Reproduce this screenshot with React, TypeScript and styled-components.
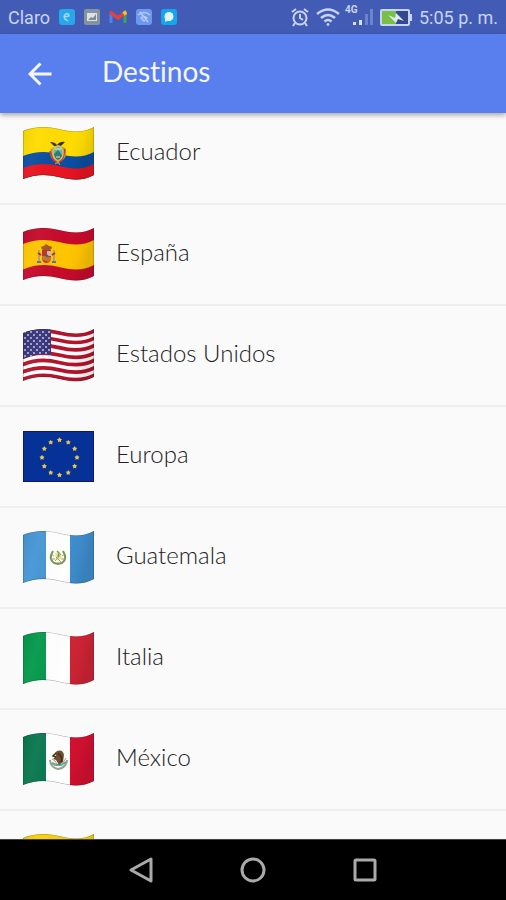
import React, { useId } from "react";
import type { ReactNode } from "react";
import styled, { createGlobalStyle } from "styled-components";

const GlobalStyle = createGlobalStyle`
  * { box-sizing: border-box; }
  body { margin: 0; background: #fafafa; }
`;

const Screen = styled.div`
  display: flex;
  flex-direction: column;
  height: 100vh;
  overflow: hidden;
  background: #fafafa;
  font-family: Lato, "Open Sans", sans-serif;
  font-variant-ligatures: none;
`;

const StatusBar = styled.div`
  display: flex;
  flex: none;
  align-items: center;
  justify-content: space-between;
  height: 34px;
  padding: 0 8px;
  background: #425cb5;
  color: #c9d4f3;
  font-family: Roboto, sans-serif;
  font-size: 18px;
  line-height: 34px;
  white-space: nowrap;
`;

const StatusGroup = styled.div<{ $gap: number }>`
  display: flex;
  align-items: center;
  gap: ${(p) => p.$gap}px;
`;

const StatusText = styled.span`
  padding-top: 2px;
`;

const Header = styled.header`
  position: relative;
  z-index: 1;
  display: flex;
  flex: none;
  align-items: center;
  gap: 46px;
  height: 79px;
  padding: 0 24px;
  background: #597fee;
  box-shadow: 0 2px 5px rgba(0, 0, 0, 0.35);
  color: #f4f7ff;
`;

const BackButton = styled.button`
  display: flex;
  width: 32px;
  height: 32px;
  padding: 0;
  align-items: center;
  justify-content: center;
  border: 0;
  background: none;
  color: inherit;
  cursor: pointer;
`;

const Title = styled.h1`
  margin: 0;
  padding-bottom: 6px;
  font-size: 28px;
  font-weight: 400;
  line-height: 36px;
`;

const Viewport = styled.main`
  flex: 1;
  min-height: 0;
  overflow: hidden;
`;

const List = styled.ul`
  margin: -9px 0 0;
  padding: 0;
  list-style: none;
`;

const Row = styled.li`
  height: 101px;
  border-bottom: 2px solid #eeeeee;
`;

const RowLink = styled.a`
  display: flex;
  align-items: center;
  gap: 22px;
  height: 100%;
  padding: 0 23px;
  color: #222222;
  font-size: 24px;
  font-weight: 300;
  line-height: 32px;
  text-decoration: none;
`;

const RowLabel = styled.span`
  padding-bottom: 6px;
`;

const FlagArt = styled.svg`
  display: block;
  flex: none;
  width: 71px;
  height: 54px;
`;

const NavBar = styled.nav`
  display: flex;
  flex: none;
  align-items: center;
  justify-content: center;
  gap: 72px;
  height: 61px;
  border-top: 1px solid #444444;
  background: #000000;
`;

const NavButton = styled.button`
  display: flex;
  align-items: center;
  justify-content: center;
  width: 40px;
  height: 40px;
  padding: 0;
  border: 0;
  background: none;
  cursor: pointer;
`;

const curve = (y: number) =>
  `M-1 ${y + 4} L0 ${y + 4} C12 ${y - 1} 24 ${y - 1} 36 ${y + 2} S60 ${y + 6} 71 ${y} L72 ${y}`;

const outline =
  "M0 4 C12 -1 24 -1 36 2 S60 6 71 0 V48 C60 54 48 53 36 50 S12 47 0 52 Z";

const Band = ({ y, h, fill }: { y: number; h: number; fill: string }) => (
  <path d={curve(y + h / 2)} fill="none" stroke={fill} strokeWidth={h} />
);

function Waving({ children }: { children: ReactNode }) {
  const id = useId();
  return (
    <FlagArt viewBox="0 0 71 54" aria-hidden="true">
      <defs>
        <clipPath id={`${id}c`}>
          <path d={outline} />
        </clipPath>
        <linearGradient id={`${id}g`} x1="0" x2="1" y1="0" y2="0.2">
          <stop offset="0" stopColor="#000" stopOpacity="0.06" />
          <stop offset="0.25" stopColor="#fff" stopOpacity="0.04" />
          <stop offset="0.7" stopColor="#000" stopOpacity="0" />
          <stop offset="0.85" stopColor="#000" stopOpacity="0.03" />
          <stop offset="1" stopColor="#000" stopOpacity="0.1" />
        </linearGradient>
      </defs>
      <g clipPath={`url(#${id}c)`}>
        {children}
        <path d={outline} fill={`url(#${id}g)`} />
        <path d={outline} fill="none" stroke="#222" strokeOpacity="0.4" strokeWidth="1" />
      </g>
    </FlagArt>
  );
}

const Tricolor = ({ left, middle, right, children }: {
  left: string; middle: string; right: string; children?: ReactNode;
}) => (
  <Waving>
    <rect width="71" height="54" fill={middle} />
    <rect width="23" height="54" fill={left} />
    <rect x="47" width="24" height="54" fill={right} />
    {children}
  </Waving>
);

const Ecuador = () => (
  <Waving>
    <rect width="71" height="54" fill="#ffdc00" />
    <path d={`${curve(25)} V54 H-1 Z`} fill="#0b4ea2" />
    <path d={`${curve(37)} V54 H-1 Z`} fill="#e91420" />
    <path d="M27 15 q5 0 7 3 q3-4 8-3 l-3 3 -3 2 -5-1z" fill="#3c3420" />
    <path d="M28 22 q-2 6 1 10 l6 5 6-5 q4-5 1-11 l-7-3z" fill="#b79a37" />
    <path d="M27 24 l3 8 4 4M42 22 l-2 9-4 5" fill="none" stroke="#d5343b" strokeWidth="1.5" />
    <ellipse cx="35" cy="26" rx="5" ry="7" fill="#62b8b0" stroke="#d7c26a" strokeWidth="1.5" />
    <path d="M31 27 l4-4 4 5 q-1 4-4 5 q-3-1-4-6z" fill="#367b68" />
    <path d="M32 22h6M33 30h4" stroke="#e9e7d3" strokeWidth="1" />
    <path d="M32 37l3-2 2 3" stroke="#c6a148" fill="none" />
  </Waving>
);

const Spain = () => (
  <Waving>
    <rect width="71" height="54" fill="#c60b2c" />
    <path d={`${curve(12)} V${37} L71 37 C60 43 48 42 36 39 S12 36 -1 42 Z`} fill="#ffc500" />
    <path d="M16 22v12M31 22v12" stroke="#b8a078" strokeWidth="2" />
    <path d="M14 34h4M29 34h4" stroke="#477c9a" strokeWidth="2" />
    <path d="M15 25l3 2M32 25l-3 2" stroke="#b72b21" strokeWidth="2" />
    <path d="M18 20q0-2 3-2l2-2 3 2q3 0 3 2l-2 2h-7z" fill="#a45521" />
    <path d="M19 22h9v9q-1 4-4.500 4T19 31z" fill="#b93525" />
    <path d="M24 23h4v5h-4z" fill="#d6b3b5" />
    <path d="M19 28h5v5q-4 0-5-3z" fill="#c87a20" />
    <circle cx="24" cy="28" r="1.500" fill="#38649a" />
    <path d="M25 29v5M27 29v4" stroke="#e5a62c" />
  </Waving>
);

const stars = Array.from({ length: 45 }, (_, i) => ({
  x: 2 + (i % 5) * 6 + (Math.floor(i / 5) % 2) * 3,
  y: 3 + Math.floor(i / 5) * 3,
}));

const UnitedStates = () => (
  <Waving>
    <rect width="71" height="54" fill="#ffffff" />
    {[0, 1, 2, 3, 4, 5, 6].map((n) => (
      <Band key={n} y={n * 7.4} h={3.7} fill="#b3142b" />
    ))}
    <path d="M0 0H28V26C18 24 9 26 0 30Z" fill="#36357c" />
    {stars.filter((s) => s.x < 28).map((s) => (
      <circle key={`${s.x}-${s.y}`} cx={s.x} cy={s.y} r="0.9" fill="#d5d5ea" />
    ))}
  </Waving>
);

const starPath = (cx: number, cy: number) => {
  const points = Array.from({ length: 10 }, (_, i) => {
    const r = i % 2 ? 1.5 : 2.7;
    const a = (i * Math.PI) / 5 - Math.PI / 2;
    return `${cx + r * Math.cos(a)} ${cy + r * Math.sin(a)}`;
  });
  return `M${points.join("L")}Z`;
};

const Europe = () => (
  <FlagArt viewBox="0 0 71 54" aria-hidden="true">
    <rect x="0.5" y="1.5" width="70" height="50" fill="#063196" stroke="#11137c" />
    {Array.from({ length: 12 }, (_, i) => {
      const a = (i * Math.PI) / 6;
      return (
        <path key={i} d={starPath(36.500 + 17.500 * Math.sin(a), 27.500 - 17.500 * Math.cos(a))} fill="#e7c451" />
      );
    })}
  </FlagArt>
);

const Guatemala = () => (
  <Tricolor left="#4696d5" middle="#ffffff" right="#3f8dce">
    <path d="M30 20q-5 8 1 12l5 1M40 20q5 8-1 12l-5 1" fill="none" stroke="#789650" strokeWidth="2" />
    <path d="M28 23l3 2M28 28l4 0M42 23l-3 2M42 28l-4 0" stroke="#96a66e" />
    <path d="M32 22h6l1 6-6 1z" fill="#ece49a" />
    <path d="M32 30l6-7M38 31l-5-5" stroke="#a8a067" />
    <path d="M34 20l2 2-1 4" stroke="#6eaa48" strokeWidth="1.5" fill="none" />
  </Tricolor>
);

const Italy = () => <Tricolor left="#04994b" middle="#ffffff" right="#cf2435" />;

const Mexico = () => (
  <Tricolor left="#08774f" middle="#ffffff" right="#d31030">
    <path d="M27 27q1 8 8 9q8-1 9-9" fill="none" stroke="#92a78a" strokeWidth="2" />
    <path d="M29 30l4 2 5 0 5-3" fill="none" stroke="#55a8b0" strokeWidth="2" />
    <path d="M34 18q6-2 7 4l-1 7-4 3-3-5-3-1 3-3-1-3z" fill="#71502b" />
    <path d="M35 20l4 5-1 4M33 20l-3 3 3 1" fill="none" stroke="#3f2f24" strokeWidth="1.5" />
    <path d="M29 26l3 2 2 3M39 31l4-6" fill="none" stroke="#b79966" />
    <circle cx="32" cy="32" r="1" fill="#db8561" />
  </Tricolor>
);

const Colombia = () => (
  <Waving>
    <rect width="71" height="54" fill="#f9cf0a" />
    <path d={`${curve(25)} V54 H-1 Z`} fill="#174fa0" />
    <path d={`${curve(37)} V54 H-1 Z`} fill="#ce1b2b" />
  </Waving>
);

const destinations = [
  { name: "Ecuador", Flag: Ecuador },
  { name: "España", Flag: Spain },
  { name: "Estados Unidos", Flag: UnitedStates },
  { name: "Europa", Flag: Europe },
  { name: "Guatemala", Flag: Guatemala },
  { name: "Italia", Flag: Italy },
  { name: "México", Flag: Mexico },
  { name: "", Flag: Colombia },
];

const Notifications = () => (
  <>
    <svg width="16" height="16" viewBox="0 0 16 16" aria-hidden="true">
      <rect width="16" height="16" rx="3" fill="#28a7ea" />
      <path d="M5 8l5-1q0-3-3-2-3 2-1 5l3 2" fill="none" stroke="#a6dcf6" strokeWidth="1.5" />
    </svg>
    <svg width="16" height="16" viewBox="0 0 16 16" aria-hidden="true">
      <rect width="16" height="16" rx="2" fill="#8593a0" />
      <rect x="3" y="4" width="10" height="8" fill="#dce2e5" />
      <path d="M4 11l3-3 2 1 3-4v6z" fill="#7c8992" />
    </svg>
    <svg width="18" height="14" viewBox="0 0 18 14" aria-hidden="true">
      <path d="M2 3v10" stroke="#4e83e9" strokeWidth="3" />
      <path d="M16 3v10" stroke="#36a65c" strokeWidth="3" />
      <path d="M1 2l8 6 8-6" fill="none" stroke="#df4340" strokeWidth="3.500" />
      <path d="M14.500 4l3-2" stroke="#f2bd2e" strokeWidth="4" />
    </svg>
    <svg width="16" height="16" viewBox="0 0 16 16" aria-hidden="true">
      <rect width="16" height="16" rx="3" fill="#6e98ef" />
      <path d="M2 6q6-5 12 0M5 9q3-3 6 0l-3 3zM4 3l8 10" fill="none" stroke="#b6cbf8" strokeWidth="1.5" />
    </svg>
    <svg width="16" height="16" viewBox="0 0 16 16" aria-hidden="true">
      <rect width="16" height="16" rx="3" fill="#16a4ec" />
      <circle cx="8" cy="7.500" r="4.500" fill="#e2f2fc" />
      <path d="M4 9v4l4-2z" fill="#e2f2fc" />
    </svg>
  </>
);

const SystemIcons = () => (
  <>
    <svg width="18" height="20" viewBox="0 0 18 20" fill="none" stroke="currentColor" strokeWidth="2" aria-hidden="true">
      <circle cx="9" cy="11" r="6.500" />
      <path d="M9 7v4l3 2M1 5l4-3M17 5l-4-3M4 16l-2 3M14 16l2 3" />
    </svg>
    <svg width="24" height="20" viewBox="0 0 24 20" fill="none" stroke="currentColor" strokeWidth="2.500" aria-hidden="true">
      <path d="M1 7q11-9 22 0M5 11q7-6 14 0M8.500 14.500q3.500-3 7 0" />
      <circle cx="12" cy="17.500" r="1" fill="currentColor" strokeWidth="1" />
    </svg>
    <Signal>
      <NetworkLabel>4G</NetworkLabel>
      <svg width="26" height="20" viewBox="0 0 26 20" aria-hidden="true">
        <path d="M6 15h3v3H6zM12 13h3v5h-3z" fill="#d8e2fb" />
        <path d="M18 7h3v11h-3zM23 2h3v16h-3z" fill="#6d83cb" />
      </svg>
    </Signal>
    <svg width="32" height="17" viewBox="0 0 32 17" aria-hidden="true">
      <rect x="1" y="1" width="28" height="15" rx="1" fill="#33498f" stroke="#c9d4f3" strokeWidth="2" />
      <rect x="2" y="2" width="14" height="13" fill="#78bf48" />
      <path d="M30 5h2v7h-2z" fill="#c9d4f3" />
      <path d="M8 6l7 3 1-5 8 8-6-2-2 4z" fill="#e0eaf3" />
    </svg>
  </>
);

const Signal = styled.span`
  position: relative;
  display: flex;
`;

const NetworkLabel = styled.span`
  position: absolute;
  top: -3px;
  left: -2px;
  font-size: 10px;
  font-weight: 700;
  line-height: 12px;
`;

export default function App() {
  return (
    <Screen>
      <GlobalStyle />
      <StatusBar>
        <StatusGroup $gap={9}>
          <StatusText>Claro</StatusText>
          <Notifications />
        </StatusGroup>
        <StatusGroup $gap={7}>
          <SystemIcons />
          <StatusText>5:05 p. m.</StatusText>
        </StatusGroup>
      </StatusBar>
      <Header>
        <BackButton aria-label="Volver">
          <svg width="24" height="24" viewBox="0 0 24 24" fill="none" stroke="currentColor" strokeWidth="3" aria-hidden="true">
            <path d="M23.500 12H3M12.500 1.500L2 12l10.500 10.500" />
          </svg>
        </BackButton>
        <Title>Destinos</Title>
      </Header>
      <Viewport>
        <List>
          {destinations.map(({ name, Flag }) => (
            <Row key={name}>
              <RowLink href="#">
                <Flag />
                <RowLabel>{name}</RowLabel>
              </RowLink>
            </Row>
          ))}
        </List>
      </Viewport>
      <NavBar aria-label="Sistema">
        <NavButton aria-label="Atrás">
          <svg width="26" height="28" viewBox="0 0 26 28" fill="none" stroke="#aaaaaa" strokeWidth="3" strokeLinejoin="round" aria-hidden="true">
            <path d="M23 3v22L3 14z" />
          </svg>
        </NavButton>
        <NavButton aria-label="Inicio">
          <svg width="26" height="26" viewBox="0 0 26 26" fill="none" stroke="#aaaaaa" strokeWidth="3" aria-hidden="true">
            <circle cx="13" cy="13" r="11" />
          </svg>
        </NavButton>
        <NavButton aria-label="Recientes">
          <svg width="24" height="24" viewBox="0 0 24 24" fill="none" stroke="#aaaaaa" strokeWidth="3" aria-hidden="true">
            <rect x="2" y="2" width="20" height="20" rx="1" />
          </svg>
        </NavButton>
      </NavBar>
    </Screen>
  );
}
